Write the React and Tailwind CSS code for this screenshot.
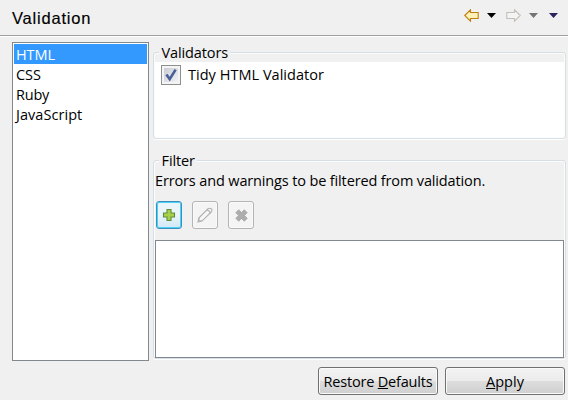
import React from "react";

const validators = ["HTML", "CSS", "Ruby", "JavaScript"];
const tracking = {
  HTML: "tracking-[-0.1px]",
  CSS: "tracking-[-0.1px]",
  Ruby: "tracking-[-0.2px]",
  JavaScript: "tracking-[0.05px]",
};

function Arrow({ fill, stroke, flip }) {
  return (
    <svg width="15" height="13" viewBox="0 0 15 13" className={flip ? "-scale-x-100" : ""}>
      <path d="M0.7 6.5L6.5 0.8V3.5H14.2V9.5H6.5V12.2Z" fill={fill} stroke={stroke} strokeWidth="1.1" />
    </svg>
  );
}

function Caret({ color, className }) {
  return (
    <svg width="9" height="5" viewBox="0 0 9 5" className={className}>
      <path d="M0 0H9L4.5 5Z" fill={color} />
    </svg>
  );
}

function Group({ title, titleClass, className, children }) {
  return (
    <fieldset className={`min-w-0 rounded-[3px] border border-[#d5dfe5] shadow-[inset_0_0_0_1px_#fbfcfc,0_1px_0_#fff] ${className}`}>
      <div className={`-mt-[10px] ml-[5px] h-[20px] w-max bg-[#f0f0f0] px-[2.5px] leading-[20px] ${titleClass}`}>{title}</div>
      {children}
    </fieldset>
  );
}

function ToolButton({ active, children }) {
  return (
    <button
      className={`flex h-[28px] w-[26px] items-center justify-center rounded-[3px] border ${
        active
          ? "border-[#3c8fbd] bg-linear-to-b from-[#eaf5fb] from-50% to-[#cfe8f5] to-100% shadow-[inset_0_0_0_1px_#49d2f7]"
          : "border-[#b2b4b5] bg-[#f4f4f4] shadow-[inset_0_0_0_1px_#fafafa]"
      }`}
    >
      {children}
    </button>
  );
}

function PushButton({ children }) {
  return (
    <button className="h-[28px] w-[120px] rounded-[3px] border border-[#707070] bg-[linear-gradient(#f3f3f3_0%,#ebebeb_49%,#dddddd_51%,#cfcfcf_100%)] leading-[27px] whitespace-nowrap shadow-[inset_0_0_0_1px_#fafafa]">
      {children}
    </button>
  );
}

export default function App() {
  return (
    <div className="flex h-[400px] w-[568px] flex-col overflow-hidden bg-[#f0f0f0] font-['Open_Sans','Noto_Sans',sans-serif] text-[14.5px] text-black">
      <header className="flex h-[36px] shrink-0 items-center border-b border-[#a0a0a0] pr-[10px] pl-[12px] shadow-[0_1px_0_#fff]">
        <h1
          className="text-[16.5px] leading-[20px] tracking-[0.8px] [-webkit-text-stroke:0.15px_black] [font-family:'Liberation_Sans',Arial,sans-serif]"
        >
          Validation
        </h1>
        <div className="ml-auto flex items-center pb-[5px]">
          <Arrow fill="#fff0b5" stroke="#bd8014" />
          <Caret color="#000" className="ml-[8px]" />
          <span className="ml-[10px] flex"><Arrow fill="#f5f4f2" stroke="#c3c0bb" flip /></span>
          <Caret color="#747474" className="ml-[8px]" />
          <Caret color="#292160" className="ml-[11px]" />
        </div>
      </header>

      <div className="flex pt-[6px] pl-[12px]">
        <ul className="h-[319px] w-[137px] border border-[#828790] bg-white p-px">
          {validators.map((v, i) => (
            <li key={v} className={`h-[20px] pl-[2px] leading-[21px] ${tracking[v]} ${i === 0 ? "bg-[#3399ff] text-white" : ""}`}>
              {v}
            </li>
          ))}
        </ul>

        <div className="ml-[4px] flex w-[413px] flex-col pt-[10px]">
          <Group title="Validators" titleClass="tracking-[-0.12px]" className="h-[87px]">
            <div className="mx-px -mt-px h-[75px] bg-white pt-[3px] pl-[6px]">
              <label className="flex items-center">
                <span className="flex h-[20px] w-[20px] items-center justify-center border border-[#8e8f8f] bg-[#f4f4f4]">
                  <span className="flex h-[14px] w-[14px] items-center justify-center bg-linear-to-br from-[#c9cdd4] to-[#f2f2f4]">
                    <svg width="14" height="14" viewBox="0 0 14 14" fill="none">
                      <path d="M2.4 6.6L5.7 11.2L11.6 1.6" stroke="#4a5f97" strokeWidth="2.6" />
                    </svg>
                  </span>
                </span>
                <span className="ml-[7px] leading-[20px] tracking-[0.03px] whitespace-nowrap">Tidy HTML Validator</span>
              </label>
            </div>
          </Group>

          <Group title="Filter" titleClass="tracking-[-0.1px]" className="mt-[21px] h-[199px]">
            <p className="ml-px h-[20px] leading-[20px] tracking-[-0.14px] whitespace-nowrap">Errors and warnings to be filtered from validation.</p>
            <div className="mt-[10px] ml-[2px] flex gap-[10px]">
              <ToolButton active>
                <svg width="14" height="14" viewBox="0 0 14 14">
                  <path d="M5 1.5H9V5H12.5V9H9V12.5H5V9H1.5V5H5Z" fill="#a8d048" stroke="#5c8f3c" strokeWidth="1.1" />
                </svg>
              </ToolButton>
              <ToolButton>
                <svg width="16" height="16" viewBox="0 0 16 16" fill="none" stroke="#b0b0b0" strokeWidth="1.1">
                  <path d="M1 15L2 10.8L11 1.8Q13 0.5 14.5 2Q15.5 3.5 14.2 5L5.2 13.8Z" fill="#f7f7f7" />
                  <path d="M10 3Q12.6 3.4 13 6M2 10.8L1.8 14.2L5.2 13.8" />
                </svg>
              </ToolButton>
              <ToolButton>
                <svg width="13" height="13" viewBox="0 0 13 13">
                  <path d="M3.7 0.8L6.5 3.5L9.3 0.8L12.2 3.7L9.4 6.5L12.2 9.3L9.3 12.2L6.5 9.5L3.7 12.2L0.8 9.3L3.6 6.5L0.8 3.7Z" fill="#adadad" stroke="#a2a2a2" strokeWidth="0.8" />
                </svg>
              </ToolButton>
            </div>
            <div className="mt-[11px] ml-px h-[118px] w-[409px] border border-[#828790] bg-white" />
          </Group>
        </div>
      </div>

      <footer className="mt-[6px] flex justify-end gap-[7px] pr-[3px]">
        <PushButton><span className="tracking-[-0.2px]">Restore <u>D</u>efaults</span></PushButton>
        <PushButton><u>A</u>pply</PushButton>
      </footer>
    </div>
  );
}
